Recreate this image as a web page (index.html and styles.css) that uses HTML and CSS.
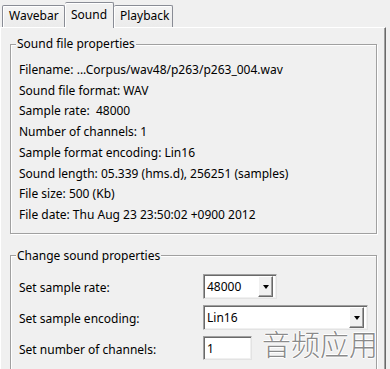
FILE: index.html
```html
<!DOCTYPE html>
<html lang="en">
<head>
    <meta charset="UTF-8">
    <title>Sound</title>
    <link rel="stylesheet" href="styles.css">
</head>
<body>
    <div class="tabs">
        <div class="tab">Wavebar</div>
        <div class="tab active">Sound</div>
        <div class="tab">Playback</div>
    </div>
    <div class="panel">
        <fieldset class="group info">
            <legend>Sound file properties</legend>
            <p>Filename: ...Corpus/wav48/p263/p263_004.wav</p>
            <p>Sound file format: WAV</p>
            <p>Sample rate:&nbsp; 48000</p>
            <p>Number of channels: 1</p>
            <p>Sample format encoding: Lin16</p>
            <p>Sound length: 05.339 (hms.d), 256251 (samples)</p>
            <p>File size: 500 (Kb)</p>
            <p>File date: Thu Aug 23 23:50:02 +0900 2012</p>
        </fieldset>
        <fieldset class="group change">
            <legend>Change sound properties</legend>
            <div class="form-row">
                <label>Set sample rate:</label>
                <div class="combo small"><span>48000</span><i class="drop"></i></div>
            </div>
            <div class="form-row">
                <label>Set sample encoding:</label>
                <div class="combo wide"><span>Lin16</span><i class="drop"></i></div>
            </div>
            <div class="form-row">
                <label>Set number of channels:</label>
                <div class="edit"><span>1</span></div>
            </div>
        </fieldset>
    </div>
    <div class="watermark">音频应用</div>
</body>
</html>
```

FILE: styles.css
```css
body {
    margin: 0;
    background: #f0f0f0;
    font-family: "Noto Sans", "Noto Sans CJK SC", sans-serif;
    font-size: 12px;
    color: #000;
    overflow: hidden;
}
.tabs {
    display: flex;
    align-items: flex-end;
    height: 27px;
    padding-left: 2px;
    position: relative;
    z-index: 1;
}
.tab {
    height: 21px;
    line-height: 20px;
    padding: 0 6px;
    border: 1px solid #898c95;
    border-bottom: none;
    border-radius: 2px 2px 0 0;
    background: linear-gradient(#f4f4f4, #ebebeb);
    box-shadow: inset 1px 1px 0 #fff;
    box-sizing: content-box;
}
.tab:first-child {
    width: 49px;
}
.tab.active {
    height: 24px;
    line-height: 24px;
    width: 36px;
    margin-bottom: -1px;
    padding-bottom: 1px;
    border-left: none;
    background: #f0f0f0;
}
.tab:last-child {
    width: 46px;
    border-left: none;
}
.panel {
    width: 386px;
    height: 360px;
    padding: 8px 8px 0 9px;
    box-sizing: border-box;
    border-top: 1px solid #fff;
    border-left: 1px solid #fff;
    border-right: 1px solid #696969;
    box-shadow: inset -1px 0 0 #a0a0a0;
}
.group {
    margin: 0;
    padding: 0 8px;
    border: 1px solid #a0a0a0;
    box-shadow: 1px 1px 0 #fff, inset 1px 1px 0 #fff;
    min-width: 0;
}
.group legend {
    margin-left: -3px;
    padding: 0 1px;
    line-height: 16px;
    background: #f0f0f0;
}
.info {
    padding-top: 8px;
    padding-bottom: 7px;
}
.info p {
    margin: 0;
    line-height: 20.7px;
}
.change {
    margin-top: 14px;
    padding-top: 10px;
    padding-bottom: 10px;
}
.form-row {
    display: flex;
    align-items: center;
    height: 25px;
    margin-bottom: 6px;
}
.form-row label {
    width: 184px;
    padding-top: 3px;
}
.combo, .edit {
    height: 25px;
    box-sizing: border-box;
    background: #fff;
    border: 1px solid;
    border-color: #a0a0a0 #e3e3e3 #e3e3e3 #a0a0a0;
    box-shadow: inset 1px 1px 0 #696969, inset -1px -1px 0 #f0f0f0;
    display: flex;
    align-items: center;
    padding: 0 2px 0 3px;
}
.combo span, .edit span {
    flex: 1;
}
.small {
    width: 74px;
}
.wide {
    width: 165px;
}
.edit {
    width: 49px;
    height: 24px;
}
.drop {
    width: 13px;
    height: 19px;
    margin-right: 1px;
    background: #f0f0f0;
    border: 1px solid;
    border-color: #fff #696969 #696969 #fff;
    box-shadow: inset -1px -1px 0 #a0a0a0;
    display: flex;
    align-items: center;
    justify-content: center;
}
.drop::after {
    content: "";
    border-left: 3.5px solid transparent;
    border-right: 3.5px solid transparent;
    border-top: 4px solid #000;
    margin-top: 1px;
}
.watermark {
    position: absolute;
    left: 262px;
    top: 329px;
    font-family: "Noto Sans CJK SC", sans-serif;
    font-size: 29px;
    font-weight: 200;
    line-height: 1;
    color: #8a8a8a;
    text-shadow: 1px 0 0 #fff, -1px 0 0 #fff, 0 1px 0 #fff, 0 -1px 0 #fff;
}
```
